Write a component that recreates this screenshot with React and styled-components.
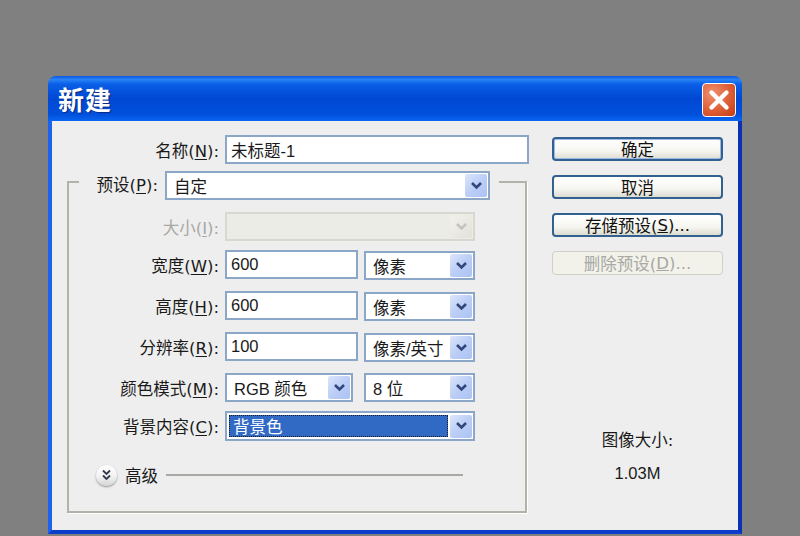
import styled, { createGlobalStyle } from "styled-components";

const GlobalStyle = createGlobalStyle`
  html, body {
    margin: 0;
    height: 100%;
    overflow: hidden;
    background: #808080;
  }
  body {
    font-family: "DejaVu Sans", "Noto Sans CJK SC", sans-serif;
    font-size: 16.5px;
    color: #1a1a1a;
  }
`;

const Page = styled.div`
  width: 800px;
  height: 536px;
  padding: 76px 0 0 48px;
  box-sizing: border-box;
  background: #808080;
  overflow: hidden;
`;

const Dialog = styled.div`
  width: 694px;
  height: 458px;
  display: flex;
  flex-direction: column;
`;

const TitleBar = styled.div`
  height: 45px;
  flex: none;
  display: flex;
  align-items: center;
  justify-content: space-between;
  padding: 0 6px 0 10px;
  border-radius: 8px 8px 0 0;
  background: linear-gradient(
    180deg,
    #0a57e0 0%,
    #2a83f5 8%,
    #0a5fe6 18%,
    #0048d4 50%,
    #0050dc 85%,
    #0a66f0 100%
  );
`;

const Title = styled.div`
  font-family: "Noto Sans CJK SC", sans-serif;
  font-size: 26px;
  font-weight: 700;
  letter-spacing: 1px;
  color: #ffffff;
  text-shadow: 1px 1px 1px #0a2a80;
`;

const CloseButton = styled.div`
  width: 32px;
  height: 32px;
  margin-top: 2px;
  display: flex;
  align-items: center;
  justify-content: center;
  border: 1px solid #ffffff;
  border-radius: 4px;
  background: radial-gradient(circle at 30% 30%, #ee9070 0%, #e0623a 50%, #c63a12 100%);
`;

const Body = styled.div`
  flex: 1;
  display: flex;
  gap: 25px;
  padding: 14px 0 0 15px;
  background: #eeeeee;
  border-left: 4px solid #1c62ee;
  border-right: 4px solid #0a30b4;
  border-bottom: 4px solid #0b3ecb;
`;

const LeftColumn = styled.div`
  width: 460px;
  flex: none;
`;

const RightColumn = styled.div`
  width: 171px;
  flex: none;
  display: flex;
  flex-direction: column;
  padding-top: 2px;
`;

const Row = styled.div`
  height: ${(props) => props.$height || 29}px;
  display: flex;
  align-items: center;
  gap: 6px;
  margin-top: ${(props) => props.$top || 0}px;
`;

const Label = styled.label`
  flex: none;
  width: ${(props) => props.$width}px;
  text-align: right;
  white-space: nowrap;
  color: ${(props) => (props.$disabled ? "#a8a8a4" : "#1a1a1a")};

  u {
    text-underline-offset: 2px;
  }
`;

const TextField = styled.div`
  width: ${(props) => props.$width}px;
  height: 29px;
  flex: none;
  box-sizing: border-box;
  display: flex;
  align-items: center;
  padding-left: 4px;
  font-family: "Liberation Sans", "Noto Sans CJK SC", sans-serif;
  background: #ffffff;
  border: 2px solid #8ba6c6;
`;

const SelectBox = styled.div`
  width: ${(props) => props.$width}px;
  height: ${(props) => props.$height || 29}px;
  flex: none;
  box-sizing: border-box;
  display: flex;
  align-items: center;
  justify-content: space-between;
  margin: ${(props) => (props.$lowered ? 2 : 0)}px 0 0 ${(props) => props.$left || 0}px;
  padding: 1px 1px 1px ${(props) => props.$inset || 7}px;
  font-family: "Liberation Sans", "Noto Sans CJK SC", sans-serif;
  background: ${(props) => (props.$disabled ? "#ecece6" : "#ffffff")};
  border: 2px solid ${(props) => (props.$disabled ? "#d8d8d0" : "#8ba6c6")};
`;

const Highlight = styled.div`
  flex: 1;
  align-self: stretch;
  display: flex;
  align-items: center;
  margin: 1px 2px 1px 0;
  padding-left: 4px;
  color: #ffffff;
  background: #316ac5;
  outline: 1px dotted #1a1a1a;
  outline-offset: -1px;
`;

const ArrowButton = styled.div`
  width: 22px;
  height: 23px;
  flex: none;
  display: flex;
  align-items: center;
  justify-content: center;
  border-radius: 2px;
  background: ${(props) =>
    props.$disabled
      ? "linear-gradient(135deg, #f2f2ec, #e2e2da)"
      : "linear-gradient(135deg, #dce6fb 0%, #bccef6 50%, #abc2f4 100%)"};
  color: ${(props) => (props.$disabled ? "#c4c4bc" : "#33467c")};
`;

const Group = styled.fieldset`
  margin: 7px 0 0;
  padding: 19px 0 0;
  height: 342px;
  box-sizing: border-box;
  min-width: 0;
  border: 2px solid #b2b2aa;
  box-shadow: 1px 1px 0 #ffffff;
`;

const Legend = styled.legend`
  height: 22px;
  display: flex;
  align-items: flex-start;
  gap: 7px;
  margin-left: 10px;
  padding: 0 9px 0 0;
`;

const LegendLabel = styled(Label)`
  line-height: 29px;
`;

const AdvancedRow = styled.div`
  display: flex;
  align-items: center;
  margin: 22px 62px 0 27px;
`;

const RoundButton = styled.div`
  width: 21px;
  height: 21px;
  flex: none;
  display: flex;
  align-items: center;
  justify-content: center;
  border-radius: 50%;
  color: #33384a;
  background: linear-gradient(180deg, #ffffff 0%, #f2f2f2 55%, #d4d4d4 100%);
  box-shadow: 0 1px 2px #8a8a8a;
`;

const AdvancedText = styled.span`
  margin: 0 8px 0 8px;
`;

const Divider = styled.div`
  flex: 1;
  height: 2px;
  background: #a8a8a4;
`;

const Button = styled.div`
  height: 24px;
  margin-bottom: 14px;
  box-sizing: border-box;
  display: flex;
  align-items: center;
  justify-content: center;
  border-radius: 4px;
  white-space: nowrap;
  color: ${(props) => (props.$disabled ? "#a8a8a4" : "#111111")};
  border: ${(props) => (props.$disabled ? "1px solid #d0d0c8" : "2px solid #32608f")};
  background: ${(props) =>
    props.$disabled
      ? "#f2f2ea"
      : "linear-gradient(180deg, #ffffff 0%, #f6f6f0 60%, #dcdcd2 100%)"};
  box-shadow: ${(props) => (props.$primary ? "inset 0 0 0 1px #9ab8ea" : "none")};
`;

const ImageInfo = styled.div`
  margin-top: 138px;
  display: flex;
  flex-direction: column;
  align-items: center;
  gap: 13px;
`;

const SizeValue = styled.span`
  font-family: "Liberation Sans", sans-serif;
`;

const Chevron = () => (
  <svg width="13" height="10" viewBox="0 0 13 10" aria-hidden="true">
    <path d="M2 2l4.5 4.5L11 2" fill="none" stroke="currentColor" strokeWidth="2.6" />
  </svg>
);

const DoubleChevron = () => (
  <svg width="11" height="12" viewBox="0 0 11 12" aria-hidden="true">
    <path d="M2 1.5l3.5 3.5L9 1.5M2 6.5L5.5 10 9 6.5" fill="none" stroke="currentColor" strokeWidth="1.8" />
  </svg>
);

const Select = ({ width, left, lowered, children, disabled }) => (
  <SelectBox $width={width} $left={left} $lowered={lowered} $disabled={disabled}>
    <span>{children}</span>
    <ArrowButton $disabled={disabled}>
      <Chevron />
    </ArrowButton>
  </SelectBox>
);

const App = () => (
  <Page>
    <GlobalStyle />
    <Dialog>
      <TitleBar>
        <Title>新建</Title>
        <CloseButton>
          <svg width="22" height="22" viewBox="0 0 22 22" aria-hidden="true">
            <path d="M3.5 3.5l15 15M18.5 3.5l-15 15" stroke="#ffffff" strokeWidth="4.4" strokeLinecap="round" />
          </svg>
        </CloseButton>
      </TitleBar>
      <Body>
        <LeftColumn>
          <Row>
            <Label $width={152}>
              名称(<u>N</u>):
            </Label>
            <TextField $width={304}>未标题-1</TextField>
          </Row>
          <Group>
            <Legend>
              <LegendLabel $width={79}>
                预设(<u>P</u>):
              </LegendLabel>
              <Select width={325}>自定</Select>
            </Legend>
            <Row>
              <Label $width={150} $disabled>
                大小(<u>I</u>):
              </Label>
              <Select width={250} disabled />
            </Row>
            <Row $top={9}>
              <Label $width={150}>
                宽度(<u>W</u>):
              </Label>
              <TextField $width={133}>600</TextField>
              <Select width={111} lowered>像素</Select>
            </Row>
            <Row $top={12}>
              <Label $width={150}>
                高度(<u>H</u>):
              </Label>
              <TextField $width={133}>600</TextField>
              <Select width={111} lowered>像素</Select>
            </Row>
            <Row $top={12}>
              <Label $width={150}>
                分辨率(<u>R</u>):
              </Label>
              <TextField $width={133}>100</TextField>
              <Select width={111} lowered>像素/英寸</Select>
            </Row>
            <Row $top={12}>
              <Label $width={150}>
                颜色模式(<u>M</u>):
              </Label>
              <Select width={128}>RGB 颜色</Select>
              <Select width={111} left={5}>8 位</Select>
            </Row>
            <Row $top={9} $height={30}>
              <Label $width={150}>
                背景内容(<u>C</u>):
              </Label>
              <SelectBox $width={250} $height={30} $inset={2}>
                <Highlight>背景色</Highlight>
                <ArrowButton>
                  <Chevron />
                </ArrowButton>
              </SelectBox>
            </Row>
            <AdvancedRow>
              <RoundButton>
                <DoubleChevron />
              </RoundButton>
              <AdvancedText>高级</AdvancedText>
              <Divider />
            </AdvancedRow>
          </Group>
        </LeftColumn>
        <RightColumn>
          <Button $primary>确定</Button>
          <Button>取消</Button>
          <Button>
            存储预设(<u>S</u>)...
          </Button>
          <Button $disabled>
            删除预设(<u>D</u>)...
          </Button>
          <ImageInfo>
            <span>图像大小:</span>
            <SizeValue>1.03M</SizeValue>
          </ImageInfo>
        </RightColumn>
      </Body>
    </Dialog>
  </Page>
);

export default App;
